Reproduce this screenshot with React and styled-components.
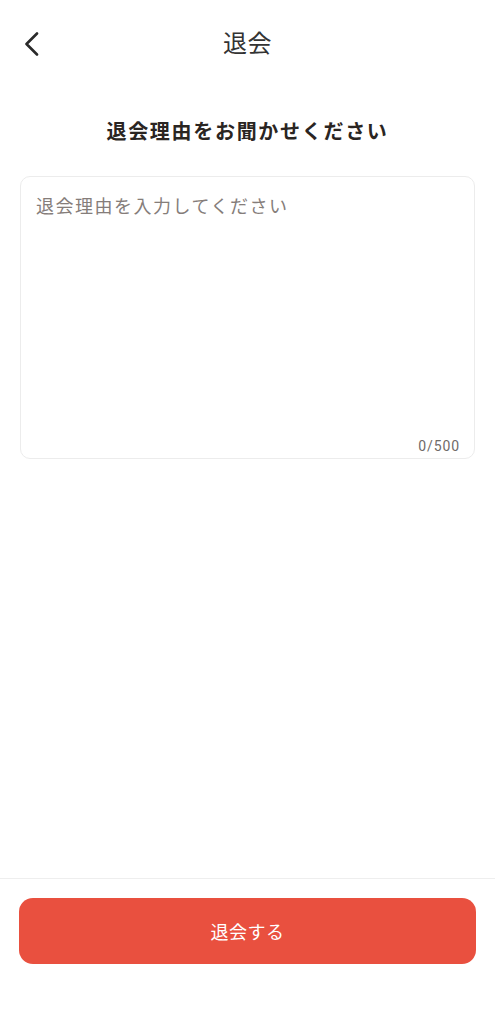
import React from "react";
import styled, { createGlobalStyle } from "styled-components";

const Global = createGlobalStyle`
  html, body { margin: 0; padding: 0; background: #ffffff; }
  body { font-family: "Noto Sans CJK JP", "Noto Sans", sans-serif; color: #222; }
  * { box-sizing: border-box; }
`;

const Page = styled.div`
  min-height: 1024px;
  display: flex;
  flex-direction: column;
  background: #fff;
`;

const Header = styled.header`
  height: 88px;
  display: grid;
  grid-template-columns: 60px 1fr 60px;
  align-items: center;
`;

const BackButton = styled.button`
  border: 0;
  background: transparent;
  padding: 0 0 0 23px;
  height: 44px;
  display: flex;
  align-items: center;
  color: #2a2a2a;
  cursor: pointer;
`;

const Title = styled.h1`
  margin: 0;
  padding-bottom: 5px;
  line-height: 32px;
  text-align: center;
  font-size: 24px;
  font-weight: 400;
  color: #333;
  letter-spacing: 0.5px;
`;

const Main = styled.main`
  flex: 1;
  display: flex;
  flex-direction: column;
  padding: 0 20px;
`;

const Heading = styled.h2`
  margin: 28px 0 30px;
  line-height: 30px;
  text-align: center;
  font-size: 20px;
  font-weight: 700;
  color: #2a2522;
  letter-spacing: 1.7px;
`;

const Box = styled.div`
  height: 283px;
  border: 1px solid #ececec;
  border-radius: 10px;
  display: flex;
  flex-direction: column;
  padding: 14px 14px 2px 15px;
`;

const Area = styled.textarea`
  flex: 1;
  border: 0;
  outline: none;
  resize: none;
  padding: 0;
  font-family: inherit;
  font-size: 18px;
  line-height: 28px;
  letter-spacing: 1.5px;
  color: #333;
  background: transparent;
  &::placeholder { color: #857d7a; }
`;

const Counter = styled.div`
  align-self: flex-end;
  font-family: "Roboto", "Noto Sans", sans-serif;
  font-size: 14px;
  letter-spacing: 0.9px;
  color: #6f6a68;
  line-height: 20px;
`;

const Footer = styled.footer`
  border-top: 1px solid #eeeeee;
  padding: 19px 19px 60px;
`;

const SubmitButton = styled.button`
  width: 100%;
  height: 66px;
  border: 0;
  border-radius: 14px;
  background: #e9503f;
  color: #fff;
  font-family: inherit;
  font-size: 18px;
  font-weight: 400;
  letter-spacing: 0.5px;
  cursor: pointer;
`;

export default function App() {
  return (
    <>
      <Global />
      <Page>
        <Header>
          <BackButton aria-label="戻る">
            <svg width="16" height="24" viewBox="0 0 16 24" fill="none">
              <path d="M14 1.5L3.5 12L14 22.5" stroke="currentColor" strokeWidth="2.6" strokeLinecap="round" strokeLinejoin="round" />
            </svg>
          </BackButton>
          <Title>退会</Title>
          <div />
        </Header>
        <Main>
          <Heading>退会理由をお聞かせください</Heading>
          <Box>
            <Area placeholder="退会理由を入力してください" maxLength={500} />
            <Counter>0/500</Counter>
          </Box>
        </Main>
        <Footer>
          <SubmitButton>退会する</SubmitButton>
        </Footer>
      </Page>
    </>
  );
}
